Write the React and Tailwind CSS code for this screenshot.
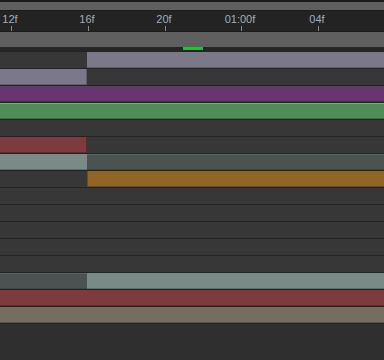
import React from "react";

const ticks = [
  { x: 11, label: "12f" },
  { x: 88, label: "16f" },
  { x: 165, label: "20f" },
  { x: 241, label: "01:00f" },
  { x: 318, label: "04f" },
];

function Clip({ cls }) {
  return <div className={`h-full ${cls}`} />;
}

const EMPTY = "bg-[#373737]";

const rows = [
  { left: EMPTY, right: "bg-[#7a7889] border-b border-[#5f5d6c]" },
  { left: "bg-[#7a7889] border-b border-r border-[#5f5d6c]", right: EMPTY },
  { full: "bg-[#693571] border-b border-[#4e2654]" },
  { full: "bg-[#4f8d57] border-t border-[#74b07a] border-b border-b-[#3a6a40]" },
  { full: EMPTY },
  { left: "bg-[#7d3b3d] border-b border-r border-[#5e2a2c]", right: EMPTY },
  { left: "bg-[#7a8a87] border-b border-[#5f6e6b]", right: "bg-[#4a5252] border-b border-[#3e4545] border-t border-t-[#5a6464]" },
  { left: EMPTY, right: "bg-[#916525] border-b border-l border-[#6e4b18]" },
  { full: EMPTY },
  { full: EMPTY },
  { full: EMPTY },
  { full: EMPTY },
  { full: EMPTY },
  { left: "bg-[#4a5252] border-b border-[#3e4545] border-t border-t-[#5a6464]", right: "bg-[#7a8a87] border-b border-[#5f6e6b]" },
  { full: "bg-[#7d3b3d] border-b border-[#5e2a2c]" },
  { full: "bg-[#756d5f] border-b border-[#5a5448]" },
];

export default function App() {
  return (
    <div
      className="w-[384px] h-[360px] overflow-hidden bg-[#2f2f2f] flex flex-col"
      style={{ fontFamily: '"Liberation Sans", Arial, sans-serif' }}
    >
      <div className="h-[2px] bg-[#1c1c1c]" />
      <div className="h-[8px] bg-[#5f5f5f]" />
      <div className="h-[1px] bg-[#1c1c1c]" />
      <div className="h-[20px] bg-[#232323] relative">
        {ticks.map((t) => (
          <React.Fragment key={t.label}>
            <div
              className="absolute top-[2px] -translate-x-1/2 text-[11px] leading-[12px] text-[#a2adbb]"
              style={{ left: t.x - 1 }}
            >
              {t.label}
            </div>
            <div
              className="absolute top-[15px] w-[1px] h-[5px] bg-[#8a8a8a]"
              style={{ left: t.x }}
            />
          </React.Fragment>
        ))}
      </div>
      <div className="h-[1px] bg-[#1c1c1c]" />
      <div className="h-[15px] bg-[#5f5f5f]" />
      <div className="h-[4px] bg-[#262626] relative">
        <div className="absolute left-[183px] top-[0px] w-[20px] h-[3px] bg-[#1fc33a]" />
      </div>
      {rows.map((r, i) => (
        <div key={i} className="h-[17px] border-t border-[#232323] flex">
          {r.full ? (
            <div className="flex-1">
              <Clip cls={r.full} />
            </div>
          ) : (
            <>
              <div className="w-[87px]">
                <Clip cls={r.left} />
              </div>
              <div className="flex-1">
                <Clip cls={r.right} />
              </div>
            </>
          )}
        </div>
      ))}
      <div className="h-[1px] bg-[#232323]" />
      <div className="flex-1 bg-[#2f2f2f]" />
    </div>
  );
}
